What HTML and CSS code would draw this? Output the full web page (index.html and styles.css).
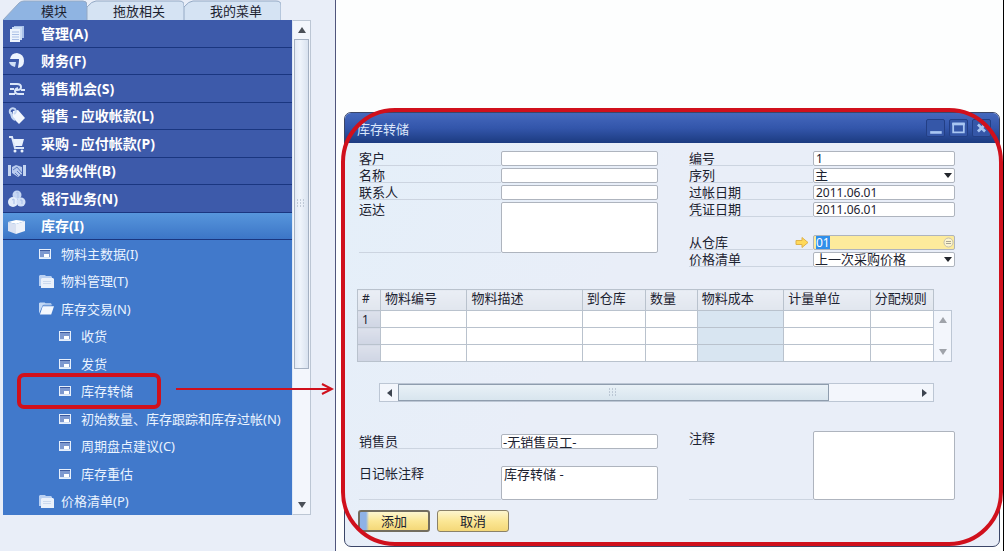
FILE: index.html
```html
<!DOCTYPE html>
<html lang="zh-CN">
<head>
    <meta charset="UTF-8">
    <meta name="viewport" content="width=device-width, initial-scale=1.0">
    <title>库存转储</title>
    <link rel="stylesheet" href="styles.css">
</head>
<body>

    <!-- Shared icons -->
    <svg class="icon-defs" aria-hidden="true">
        <symbol id="icon-form" viewBox="0 0 12 10">
            <rect x="0.5" y="0.5" width="11" height="9" fill="#7d98cf" stroke="#e6effc"/>
            <path d="M1 1.5h10" stroke="#3d5a9f"/>
            <rect x="5" y="5" width="5" height="3" fill="#fff"/>
            <path d="M1 8.5h10" stroke="#d5e2f6"/>
        </symbol>
        <symbol id="icon-folder" viewBox="0 0 15 13">
            <path d="M0 11V1l1-1h5l1 1h5l1 1v9z" fill="#b9d0f2"/>
            <path d="M2 13V4l1-1h11l1 1v9z" fill="#eaf1fb"/>
            <path d="M4 6.500h8M4 8.500h8" stroke="#cbd9ee"/>
        </symbol>
        <symbol id="icon-folder-open" viewBox="0 0 16 13">
            <path d="M0 12V1l1-1h5l1 1h6v2H4z" fill="#c3d9f6"/>
            <path d="M1 13L4 4h12l-3 9z" fill="#f3f8fe"/>
            <path d="M5 2.500h9" stroke="#9dbce8"/>
        </symbol>
    </svg>

    <div class="app">

        <!-- Main menu -->
        <aside class="sidebar">
            <div class="tabs">
                <button type="button" class="tab active"><svg viewBox="0 0 84 20" preserveAspectRatio="none"><path d="M0 20L16 3Q18 1 21 1H80Q84 1 84 5V20" /></svg><span>模块</span></button>
                <button type="button" class="tab"><svg viewBox="0 0 97 20" preserveAspectRatio="none"><path d="M0 20V7Q5 1 9 1H92Q97 1 97 5V20"/></svg><span>拖放相关</span></button>
                <button type="button" class="tab"><svg viewBox="0 0 97 20" preserveAspectRatio="none"><path d="M0 20V7Q5 1 9 1H92Q97 1 97 5V20"/></svg><span>我的菜单</span></button>
            </div>
            <div class="menu">
                <ul class="tree">
                    <li class="module">
                        <svg class="icon" viewBox="0 0 18 18"><path d="M6 1h10v12H6z" fill="#a9c1ea"/><path d="M4 2h10v13H4z" fill="#cbdcf5"/><path d="M2 4h10v13H2z" fill="#eef4fd"/><path d="M4 7h7M4 9.500h7M4 12h7M4 14.500h7" stroke="#aabfe6"/></svg>
                        <a href="#">管理(A)</a>
                    </li>
                    <li class="module">
                        <svg class="icon" viewBox="0 0 18 18"><path d="M2 7Q3 1 9 1q7 1 7 8 0 6-6 7l1-9z" fill="#edf4fe"/><path d="M1 10h7l-1 5q-5-1-6-5z" fill="#cfdff7"/><path d="M2 8.500h8l-1 7" fill="none" stroke="#3d5aaa" stroke-width="1.500"/></svg>
                        <a href="#">财务(F)</a>
                    </li>
                    <li class="module">
                        <svg class="icon" viewBox="0 0 18 18"><path d="M2 4h7q4 0 4 3t-4 3H7M16 14h-5q-4 0-4-3 0-2 3-3M1 14h6M13 10h4M2 9h4" fill="none" stroke="#dce8fa" stroke-width="2"/></svg>
                        <a href="#">销售机会(S)</a>
                    </li>
                    <li class="module">
                        <svg class="icon" viewBox="0 0 18 18"><path d="M5 4l5-1 7 8-6 6-7-7z" fill="#f4f8fe"/><path d="M5 8Q1 7 2 3q2-3 5-1 2 3-1 5M3 5q0 6 4 8" fill="none" stroke="#c5d7f3" stroke-width="2"/></svg>
                        <a href="#">销售 - 应收帐款(L)</a>
                    </li>
                    <li class="module">
                        <svg class="icon" viewBox="0 0 18 18"><path d="M1 2h3l3 11h9" fill="none" stroke="#dce8fa" stroke-width="2"/><path d="M5 4h11l-2 7H7z" fill="#eaf2fd"/><circle cx="7" cy="16" r="1.500" fill="#eaf2fd"/><circle cx="14" cy="16" r="1.500" fill="#eaf2fd"/></svg>
                        <a href="#">采购 - 应付帐款(P)</a>
                    </li>
                    <li class="module">
                        <svg class="icon" viewBox="0 0 18 18"><path d="M0 3h3v11H0zM15 3h3v11h-3z" fill="#c5d5f0"/><path d="M4 5l4-2 6 2v7l-4 3-6-4z" fill="#b9cbee"/><path d="M5 8l4-3 5 6M7 11l3 3M9 9l4 4" fill="none" stroke="#5e7cc2"/></svg>
                        <a href="#">业务伙伴(B)</a>
                    </li>
                    <li class="module">
                        <svg class="icon" viewBox="0 0 18 18"><circle cx="9" cy="5" r="4.500" fill="#c5d6f3"/><circle cx="5" cy="12" r="5" fill="#e3edfb"/><circle cx="13" cy="12" r="4.500" fill="#d2e0f7"/><path d="M8 3l2-1v6M4 10l2-1v5M12 10l2 0v4" fill="none" stroke="#a9bfe8"/></svg>
                        <a href="#">银行业务(N)</a>
                    </li>
                    <li class="module open">
                        <svg class="icon" viewBox="0 0 18 18"><path d="M0 5l8-2 9 1-9 3z" fill="#fff"/><path d="M0 5l8 2v10l-8-3z" fill="#d9e1f2"/><path d="M8 7l9-3v10l-9 3z" fill="#eef2fa"/></svg>
                        <a href="#">库存(I)</a>
                    </li>
                    <li class="entry"><svg class="form-icon"><use href="#icon-form"/></svg><a href="#">物料主数据(I)</a></li>
                    <li class="entry"><svg class="folder-icon"><use href="#icon-folder"/></svg><a href="#">物料管理(T)</a></li>
                    <li class="entry"><svg class="folder-icon"><use href="#icon-folder-open"/></svg><a href="#">库存交易(N)</a></li>
                    <li class="entry nested"><svg class="form-icon"><use href="#icon-form"/></svg><a href="#">收货</a></li>
                    <li class="entry nested"><svg class="form-icon"><use href="#icon-form"/></svg><a href="#">发货</a></li>
                    <li class="entry nested current">
                        <svg class="form-icon"><use href="#icon-form"/></svg><a href="#">库存转储</a>
                        <svg class="pointer" viewBox="0 0 158 12"><path d="M0 6h155M146 1l10 5-10 5" fill="none" stroke="#d0101c" stroke-width="2"/></svg>
                    </li>
                    <li class="entry nested"><svg class="form-icon"><use href="#icon-form"/></svg><a href="#">初始数量、库存跟踪和库存过帐(N)</a></li>
                    <li class="entry nested"><svg class="form-icon"><use href="#icon-form"/></svg><a href="#">周期盘点建议(C)</a></li>
                    <li class="entry nested"><svg class="form-icon"><use href="#icon-form"/></svg><a href="#">库存重估</a></li>
                    <li class="entry"><svg class="folder-icon"><use href="#icon-folder"/></svg><a href="#">价格清单(P)</a></li>
                </ul>
                <div class="scrollbar vertical">
                    <span class="arrow up"></span>
                    <span class="thumb"><svg class="grip" viewBox="0 0 9 9"><path d="M0 1h9M0 4h9M0 7h9" stroke="#98a5b8" stroke-dasharray="1 2"/></svg></span>
                    <span class="arrow down"></span>
                </div>
            </div>
        </aside>

        <!-- Stock transfer window -->
        <main class="workspace">
            <section class="window">
                <header class="titlebar">
                    <h1>库存转储</h1>
                    <div class="window-buttons">
                        <button type="button" aria-label="最小化"><svg viewBox="0 0 18 18"><path d="M3 14h13" stroke="#a9c6f2" stroke-width="3"/></svg></button>
                        <button type="button" aria-label="最大化"><svg viewBox="0 0 18 18"><path d="M3 4h12v10H3z" fill="none" stroke="#a9c6f2" stroke-width="2"/><path d="M2 4.500h14" stroke="#a9c6f2" stroke-width="3"/></svg></button>
                        <button type="button" aria-label="关闭"><svg viewBox="0 0 18 18"><path d="M5 5l8 8M13 5l-8 8" stroke="#a9c6f2" stroke-width="3"/></svg></button>
                    </div>
                </header>

                <form class="window-body" id="transferForm">
                    <div class="columns">
                        <div class="fields">
                            <div class="field"><label for="customer">客户</label><input type="text" id="customer"></div>
                            <div class="field"><label for="name">名称</label><input type="text" id="name"></div>
                            <div class="field"><label for="contact">联系人</label><input type="text" id="contact"></div>
                            <div class="field"><label for="shipTo">运达</label><textarea id="shipTo" class="address"></textarea></div>
                        </div>
                        <div class="fields short">
                            <div class="field"><label for="number">编号</label><input type="text" id="number" value="1"></div>
                            <div class="field"><label for="series">序列</label><div class="select"><select id="series"><option>主</option></select></div></div>
                            <div class="field"><label for="postDate">过帐日期</label><input type="text" id="postDate" value="2011.06.01"></div>
                            <div class="field"><label for="docDate">凭证日期</label><input type="text" id="docDate" value="2011.06.01"></div>
                            <div class="field spaced">
                                <label for="fromWarehouse">从仓库
                                    <svg class="link-arrow" viewBox="0 0 14 11"><path d="M1 3.500h6v-3l6 5-6 5v-3H1z" fill="#ffd95a" stroke="#dfb24a"/></svg>
                                </label>
                                <div class="lookup">
                                    <input type="text" id="fromWarehouse" value="01">
                                    <svg class="lookup-icon" viewBox="0 0 11 11"><circle cx="5.500" cy="5.500" r="4.500" fill="#fbf4d0" stroke="#c4bfae"/><path d="M3 4.500h5M3 6.500h5" stroke="#a9a492"/></svg>
                                </div>
                            </div>
                            <div class="field"><label for="priceList">价格清单</label><div class="select"><select id="priceList"><option>上一次采购价格</option></select></div></div>
                        </div>
                    </div>

                    <div class="grid">
                        <table>
                            <colgroup>
                                <col class="w-num"><col class="w-code"><col class="w-desc"><col class="w-wh"><col class="w-qty"><col class="w-cost"><col class="w-unit"><col class="w-rule">
                            </colgroup>
                            <thead>
                                <tr><th>#</th><th>物料编号</th><th>物料描述</th><th>到仓库</th><th>数量</th><th>物料成本</th><th>计量单位</th><th>分配规则</th></tr>
                            </thead>
                            <tbody>
                                <tr><th>1</th><td></td><td></td><td></td><td></td><td class="locked"></td><td></td><td></td></tr>
                                <tr><th></th><td></td><td></td><td></td><td></td><td class="locked"></td><td></td><td></td></tr>
                                <tr><th></th><td></td><td></td><td></td><td></td><td class="locked"></td><td></td><td></td></tr>
                            </tbody>
                        </table>
                        <div class="scrollbar vertical disabled">
                            <span class="arrow up"></span>
                            <span class="arrow down"></span>
                        </div>
                    </div>
                    <div class="scrollbar horizontal">
                        <span class="arrow left"></span>
                        <span class="thumb"><svg class="grip" viewBox="0 0 9 9"><path d="M0 1h9M0 4h9M0 7h9" stroke="#98a5b8" stroke-dasharray="1 2"/></svg></span>
                        <span class="arrow right"></span>
                    </div>

                    <div class="columns footer">
                        <div class="fields">
                            <div class="field"><label for="salesman">销售员</label><input type="text" id="salesman" value="-无销售员工-"></div>
                            <div class="field journal"><label for="journal">日记帐注释</label><textarea id="journal">库存转储 -</textarea></div>
                        </div>
                        <div class="fields short">
                            <div class="field"><label for="remarks">注释</label><textarea id="remarks" class="remarks"></textarea></div>
                        </div>
                    </div>

                    <div class="actions">
                        <button type="submit" class="primary">添加</button>
                        <button type="button">取消</button>
                    </div>
                </form>
                <div class="outline"></div>
            </section>
        </main>
    </div>

    <script>
        // Start with the warehouse code selected
        document.getElementById('fromWarehouse').select();
    </script>

</body>
</html>
```
FILE: styles.css
```css
* {
    box-sizing: border-box;
}
body {
    margin: 0;
    background-color: #fdfefe;
    color: #1c2230;
    font-family: "Noto Sans", "Noto Sans CJK SC", sans-serif;
    font-size: 13px;
    line-height: 16px;
}
input, select, textarea, button {
    font: inherit;
    color: inherit;
}
a {
    color: inherit;
    text-decoration: none;
}
.icon-defs {
    display: none;
}
.app {
    display: flex;
    min-height: 100vh;
}

/* Main menu */
.sidebar {
    display: flex;
    flex-direction: column;
    flex: none;
    width: 336px;
    padding: 0 24px 36px 3px;
    background-color: #e9eef8;
    border-right: 1px solid #50557c;
}
.tabs {
    display: flex;
    height: 20px;
}
.tab {
    position: relative;
    width: 97px;
    padding: 2px 0 0 7px;
    border: none;
    background: none;
    cursor: pointer;
}
.tab.active {
    width: 84px;
    padding-left: 38px;
    text-align: left;
}
.tab svg {
    position: absolute;
    top: 0;
    left: 0;
    width: 100%;
    height: 100%;
    fill: #d5e3f3;
    stroke: #94a9c4;
}
.tab.active svg {
    fill: #8fb4e2;
}
.tab span {
    position: relative;
}
.menu {
    display: flex;
    flex: 1;
}
.tree {
    display: flex;
    flex-direction: column;
    flex: 1;
    margin: 0;
    padding: 0;
    list-style: none;
    color: #eaf3ff;
    background-color: #4179cb;
}
.tree li {
    display: flex;
    align-items: center;
    flex: 1;
    padding-left: 36px;
    white-space: nowrap;
}
.tree .module {
    padding-left: 5px;
    gap: 15px;
    color: #fff;
    font-size: 14px;
    font-weight: bold;
    background-color: #3d5aaa;
    box-shadow: inset 0 -1px #1a3680;
}
.tree .open {
    background: linear-gradient(#5796dc, #3b74c6);
}
.tree .nested {
    position: relative;
    padding-left: 56px;
}
.icon {
    width: 18px;
    height: 18px;
}
.form-icon {
    width: 12px;
    height: 10px;
    margin-right: 10px;
}
.folder-icon {
    width: 15px;
    height: 13px;
    margin-right: 7px;
}
.current::before {
    content: "";
    position: absolute;
    top: -5px;
    bottom: -4px;
    left: 14px;
    width: 136px;
    border: 4px solid #d0101c;
    border-radius: 7px;
}
.pointer {
    position: absolute;
    top: 5px;
    left: 173px;
    width: 158px;
    height: 12px;
}

/* Scrollbars */
.scrollbar {
    display: flex;
    background-color: #f3f6fc;
    border: 1px solid #bcc6d4;
}
.scrollbar .arrow {
    display: flex;
    align-items: center;
    justify-content: center;
    flex: none;
    width: 18px;
    height: 18px;
}
.arrow::before {
    content: "";
    border: 4px solid transparent;
}
.arrow.up::before {
    border-top: none;
    border-bottom: 6px solid #4b5058;
}
.arrow.down::before {
    border-bottom: none;
    border-top: 6px solid #4b5058;
}
.arrow.left::before {
    border-left: none;
    border-right: 5px solid #3d4450;
}
.arrow.right::before {
    border-right: none;
    border-left: 5px solid #3d4450;
}
.thumb {
    display: flex;
    align-items: center;
    justify-content: center;
    background: linear-gradient(to right, #e3eaf5, #eff4fb 40%, #d9e2ef);
    border: 1px solid #a5b1c2;
}
.grip {
    width: 9px;
    height: 9px;
}
.vertical {
    flex-direction: column;
    justify-content: space-between;
    align-items: center;
    width: 19px;
}
.menu .scrollbar {
    border-left-color: #dfe9f6;
}
.menu .thumb {
    width: 15px;
    flex: 330;
}
.menu .vertical::after {
    content: "";
    order: 1;
    flex: 128;
}
.menu .vertical .down {
    order: 2;
}
.disabled .arrow::before {
    opacity: 0.5;
}
.horizontal {
    height: 19px;
    margin: 21px 21px 29px 22px;
}
.horizontal .thumb {
    width: 78%;
    background: linear-gradient(#e9f1f7, #d8e5ee);
    border-color: #8f9dae;
}
.horizontal .right {
    margin-left: auto;
}

/* Stock transfer window */
.workspace {
    flex: 1;
    min-width: 0;
    padding: 112px 3px 3px 8px;
    border-right: 1px solid #000;
}
.window {
    position: relative;
    border: 1px solid #3b4668;
    border-radius: 7px;
    background: linear-gradient(120deg, #e4eff9, #e9eef8 40%);
}
.titlebar {
    display: flex;
    align-items: center;
    justify-content: space-between;
    height: 30px;
    padding: 0 8px 0 12px;
    color: #dbe6fa;
    border-radius: 6px 6px 0 0;
    background: linear-gradient(#4568bd, #3356ab 50%, #1c3b80);
}
.titlebar h1 {
    margin: 2px 0 0;
    font-size: 13px;
    font-weight: normal;
}
.window-buttons {
    display: flex;
    gap: 4px;
}
.window-buttons button {
    width: 19px;
    height: 18px;
    padding: 0;
    border: 1px solid #233f85;
    border-radius: 2px;
    background-color: #3557a8;
    cursor: pointer;
}
.window-buttons svg {
    display: block;
    width: 100%;
    height: 100%;
}
.window-body {
    padding: 8px 44px 14px 12px;
}
.columns {
    display: grid;
    grid-template-columns: 299fr 266fr;
    column-gap: 31px;
    padding-left: 2px;
}
.fields {
    display: flex;
    flex-direction: column;
    gap: 2px;
}
.field {
    display: flex;
}
.field label {
    display: flex;
    justify-content: space-between;
    flex: none;
    width: 142px;
    height: 15px;
    line-height: 15px;
    border-bottom: 1px solid #ccd4e0;
}
.short .field label {
    width: 124px;
}
.spaced {
    margin-top: 16px;
}
.field input, .field select, .field textarea {
    display: block;
    flex: 1;
    width: 100%;
    min-width: 0;
    height: 15px;
    padding: 0 2px;
    border: 1px solid #aeb4be;
    border-radius: 2px;
    outline: none;
    background-color: #fff;
    font-size: 12px;
    line-height: 13px;
}
.field textarea {
    height: 34px;
    resize: none;
    font-size: 13px;
    line-height: 15px;
}
.field select, #salesman {
    font-size: 13px;
    padding: 0 1px;
}
.field .address {
    height: 51px;
}
.field .remarks {
    height: 69px;
}
.field label:has(+ textarea) {
    height: auto;
}
.select, .lookup {
    position: relative;
    flex: 1;
}
.select select {
    appearance: none;
}
.select::after {
    content: "";
    position: absolute;
    top: 5px;
    right: 3px;
    border: 4px solid transparent;
    border-top: 5px solid #23262c;
    border-bottom: none;
    pointer-events: none;
}
.lookup input {
    background-color: #fdeb9c;
}
.lookup input::selection {
    color: #fff;
    background-color: #2f8fea;
}
.lookup-icon {
    position: absolute;
    top: 2px;
    right: 1px;
    width: 11px;
    height: 11px;
}
.link-arrow {
    width: 14px;
    height: 11px;
    margin: 2px 4px 0 0;
}

/* Item rows */
.grid {
    display: flex;
    align-items: flex-end;
    margin: 22px 3px 0 0;
}
table {
    flex: 1;
    table-layout: fixed;
    width: 100%;
    border-collapse: collapse;
}
th, td {
    height: 17px;
    padding: 0;
    border: 1px solid #b9c2cd;
    background-color: #fff;
}
th {
    padding-left: 4px;
    text-align: left;
    font-weight: normal;
    line-height: 15px;
    background: linear-gradient(#dde1ec, #cfd5e4);
}
thead th {
    height: 21px;
    padding-bottom: 3px;
    background: linear-gradient(#eaeef5, #e1e6ee);
}
tbody th, th:first-child {
    font-size: 12px;
}
.locked {
    background-color: #d8e5f1;
}
.w-num { width: 22px; }
.w-code { width: 15%; }
.w-desc { width: 20%; }
.w-wh { width: 11%; }
.w-qty { width: 9%; }
.w-cost { width: 15%; }
.w-unit { width: 15%; }
.w-rule { width: 11%; }
.grid .scrollbar {
    height: 52px;
    margin-left: -1px;
}

/* Footer */
.journal {
    margin-top: 15px;
}
.footer .fields {
    justify-content: flex-end;
}
.actions {
    display: flex;
    gap: 7px;
    margin-top: 10px;
    padding-left: 1px;
}
.actions button {
    width: 72px;
    height: 22px;
    padding: 0;
    border: 1px solid #8b8268;
    border-radius: 3px;
    background: linear-gradient(#fdf6cf, #fbe795 50%, #f4d878);
    cursor: pointer;
}
.actions .primary {
    border: 2px solid #726d5f;
    background: linear-gradient(to right, #8fb2e6 6px, transparent 9px), linear-gradient(#fdf6cf, #fbe795 50%, #f4d878);
}

/* Red marker drawn round the whole window */
.outline {
    position: absolute;
    top: -5px;
    right: -4px;
    bottom: 0;
    left: -4px;
    border: 4px solid #d0101c;
    border-radius: 54px;
    pointer-events: none;
}
```
